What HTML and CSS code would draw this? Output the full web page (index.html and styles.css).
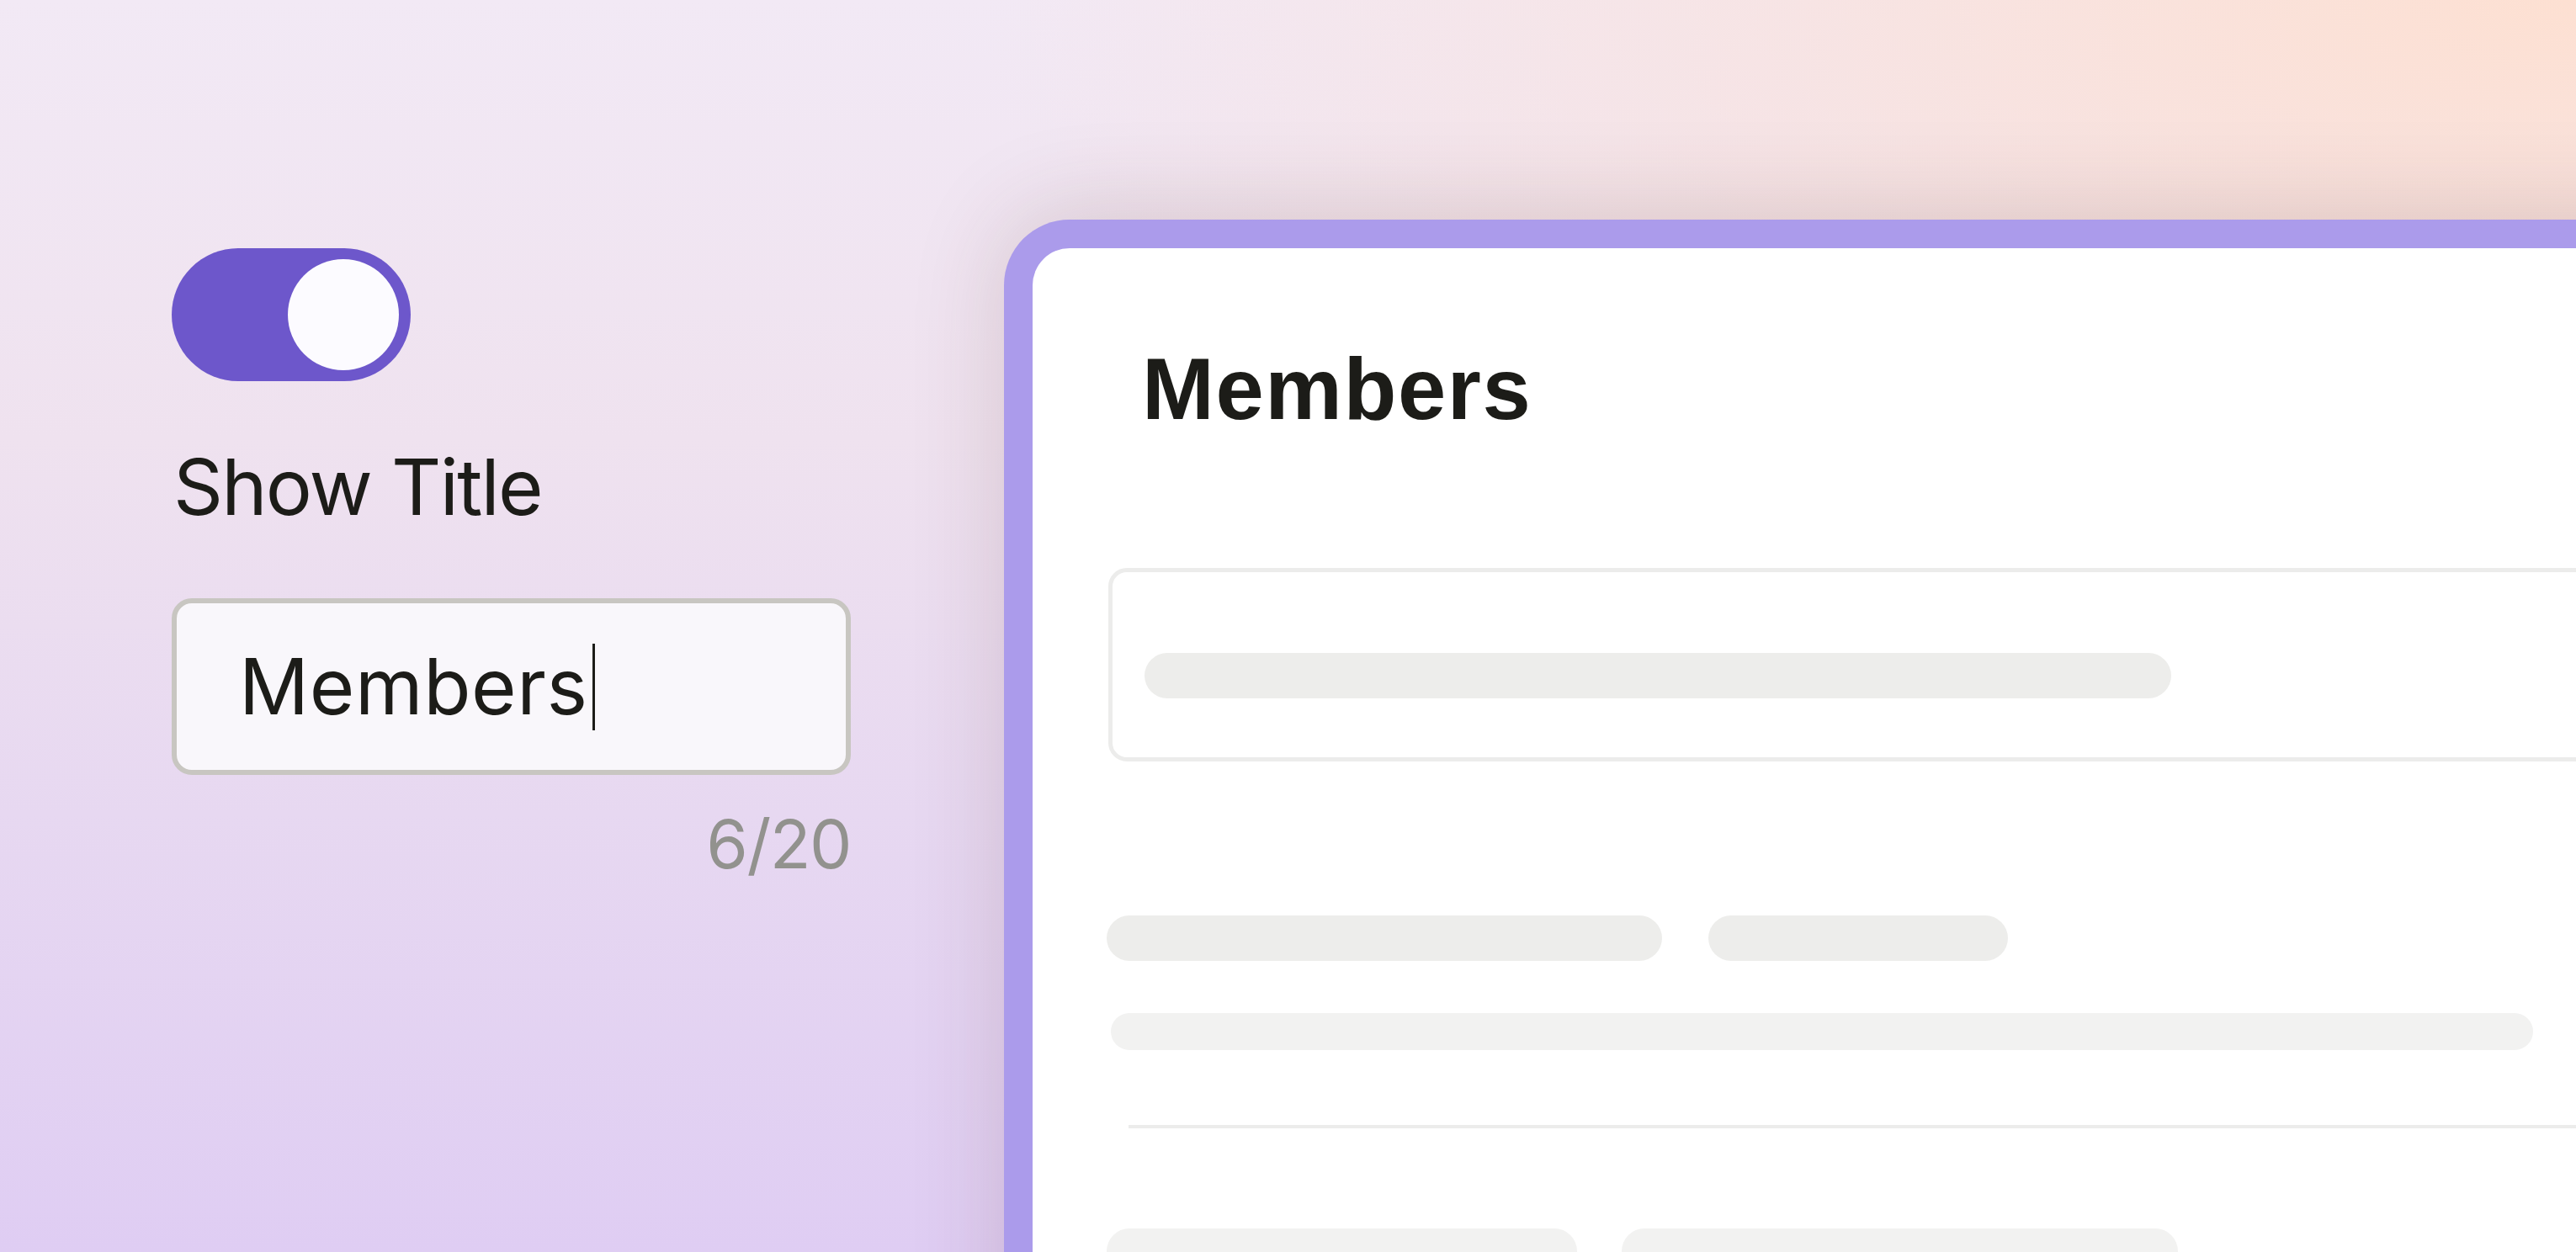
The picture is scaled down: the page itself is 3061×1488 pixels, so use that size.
FILE: index.html
```html
<!DOCTYPE html>
<html lang="en">
<head>
<meta charset="utf-8">
<title>Members</title>
<link rel="stylesheet" href="styles.css">
</head>
<body>
<main class="scene">
  <section class="settings">
    <div class="toggle" role="switch" aria-checked="true"><span class="knob"></span></div>
    <div class="label">Show Title</div>
    <div class="field-wrap">
      <div class="field"><span class="value">Members</span><span class="caret"></span></div>
      <div class="counter">6/20</div>
    </div>
  </section>
  <section class="card">
    <h1 class="card-title">Members</h1>
    <div class="search"><div class="skel skel-search"></div></div>
    <div class="row row-a">
      <div class="skel pill pill-a1"></div>
      <div class="skel pill pill-a2"></div>
    </div>
    <div class="skel line-long"></div>
    <div class="divider"></div>
    <div class="row row-b">
      <div class="skel pill light pill-b1"></div>
      <div class="skel pill light pill-b2"></div>
    </div>
  </section>
</main>
</body>
</html>
```

FILE: styles.css
```css
* { box-sizing: border-box; }
html, body { margin: 0; padding: 0; }
body {
  width: 3061px;
  height: 1488px;
  overflow: hidden;
  font-family: Inter, "Noto Sans", sans-serif;
  color: #1c1c18;
}
.scene {
  display: flex;
  width: 3061px;
  height: 1488px;
  overflow: hidden;
  background:
    radial-gradient(ellipse 62% 55% at 100% 0%, rgba(253, 224, 210, 1) 0%, rgba(250, 225, 218, 0.6) 50%, rgba(246, 228, 228, 0) 100%),
    linear-gradient(180deg, #f2e9f5 0%, #efe2ef 35%, #e7d8f1 65%, #dfcdf3 100%);
}
.settings {
  flex: 0 0 1193px;
  display: flex;
  flex-direction: column;
  align-items: flex-start;
  padding: 295px 0 0 204px;
}
.toggle {
  width: 284px;
  height: 158px;
  border-radius: 79px;
  background: #6d57cb;
  display: flex;
  align-items: center;
  justify-content: flex-end;
  padding: 0 14px;
}
.knob {
  width: 132px;
  height: 132px;
  border-radius: 50%;
  background: #fcfbff;
}
.label {
  margin-top: 80px;
  font-size: 92px;
  line-height: 1;
  font-weight: 400;
  letter-spacing: -1.8px;
  padding-left: 2px;
}
.field-wrap {
  margin-top: 86px;
  width: 807px;
  display: flex;
  flex-direction: column;
}
.field {
  height: 210px;
  border: 6px solid #c8c6c1;
  border-radius: 24px;
  background: #f9f7fb;
  display: flex;
  align-items: center;
  padding-left: 74px;
}
.value {
  font-size: 92px;
  line-height: 1;
  letter-spacing: 0.6px;
}
.caret {
  width: 3px;
  height: 103px;
  margin-left: 5px;
  background: #1c1c18;
}
.counter {
  align-self: flex-end;
  margin-top: 42px;
  margin-right: 0;
  font-size: 80px;
  line-height: 1;
  letter-spacing: -1.5px;
  color: #92928e;
}
.card {
  flex: 0 0 2100px;
  height: 1600px;
  margin-top: 261px;
  background: #ffffff;
  border: 34px solid #ab9beb;
  border-bottom: 0;
  border-radius: 78px 78px 0 0;
  box-shadow: 0 -10px 110px rgba(90, 45, 40, 0.17);
  padding: 116px 0 0 88px;
  display: flex;
  flex-direction: column;
  align-items: flex-start;
}
.card-title {
  margin: 0 0 0 42px;
  font-family: "Liberation Sans", Arial, sans-serif;
  font-weight: 700;
  font-size: 103px;
  line-height: 1;
  letter-spacing: 1.6px;
  color: #1c1c18;
}
.skel {
  background: #ededeb;
  border-radius: 27px;
}
.search {
  margin: 161px 0 0 2px;
  width: 2000px;
  height: 230px;
  border: 5px solid #ececeb;
  border-radius: 22px;
  padding: 96px 0 0 38px;
}
.skel-search {
  width: 1220px;
  height: 54px;
}
.row {
  display: flex;
  gap: 55px;
}
.row-a { margin-top: 183px; }
.pill { height: 54px; }
.pill-a1 { width: 660px; }
.pill-a2 { width: 356px; }
.line-long {
  margin: 62px 0 0 5px;
  width: 1690px;
  height: 44px;
  background: #f2f2f1;
  border-radius: 22px;
}
.divider {
  margin: 89px 0 0 26px;
  width: 1800px;
  height: 4px;
  background: #ececeb;
}
.row-b { margin-top: 119px; gap: 53px; }
.light { background: #f2f2f1; }
.pill-b1 { width: 559px; }
.pill-b2 { width: 661px; }
```
